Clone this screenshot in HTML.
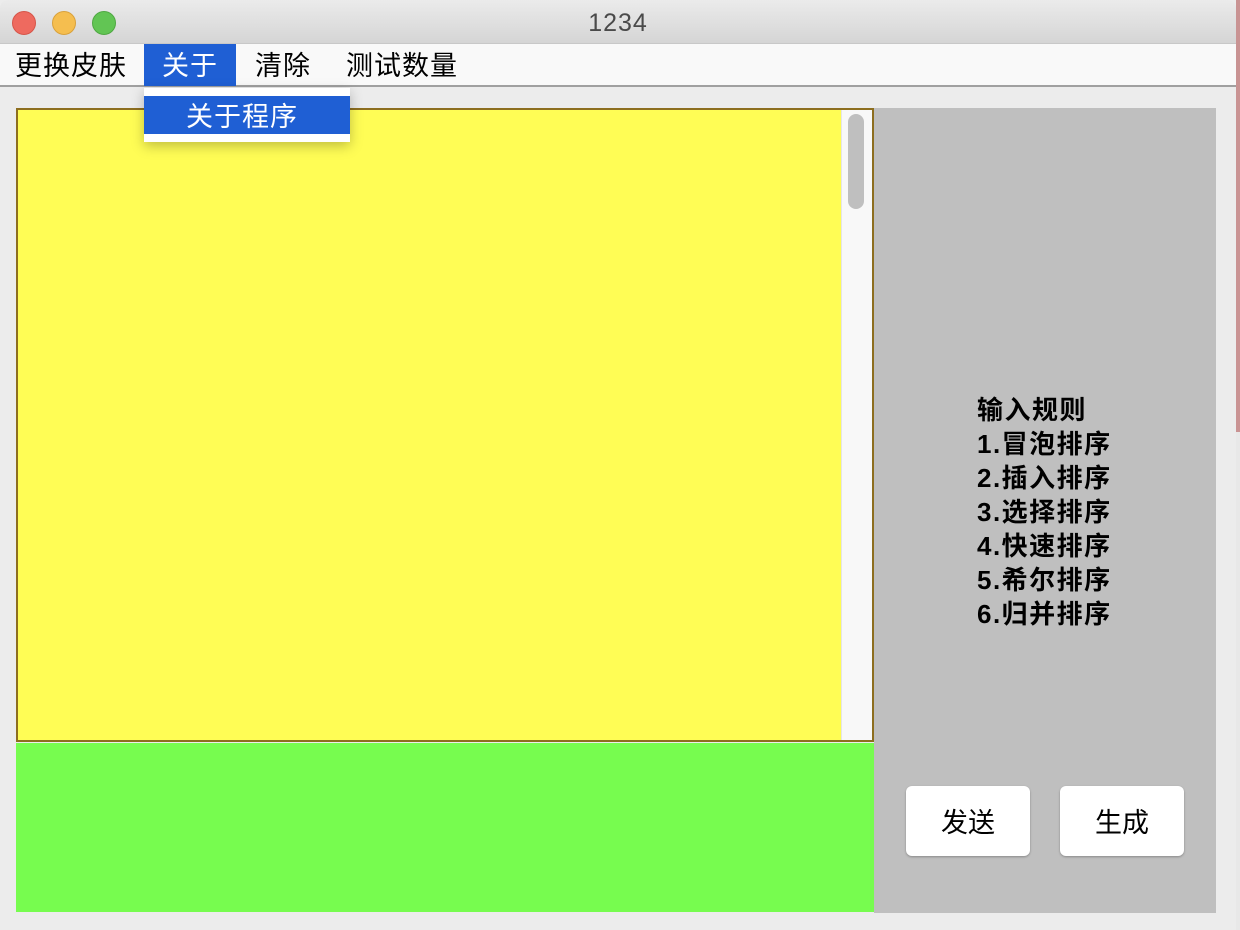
<!DOCTYPE html>
<html><head><meta charset="utf-8"><style>
*{margin:0;padding:0;box-sizing:border-box}
body{width:1240px;height:930px;background:#ececec;position:relative;overflow:hidden;font-family:"Liberation Sans","Noto Sans CJK SC",sans-serif}
.a{position:absolute}
.tb{left:0;top:0;width:1236px;height:44px;background:linear-gradient(#ebebeb,#d5d5d5);border-bottom:1px solid #c8c8c8;border-radius:8px 8px 0 0}
.dot{top:11px;width:24px;height:24px;border-radius:50%}
.mb{left:0;top:44px;width:1236px;height:43px;background:#f9f9f9;border-bottom:2px solid #a0a0a0}
.mi{top:44px;height:42px;font-size:27px;letter-spacing:1px;line-height:44px;color:#000}
</style></head><body>
<div class="a" style="left:1236px;top:0;width:4px;height:432px;background:#c99393"></div>
<div class="a" style="left:1236px;top:432px;width:4px;height:498px;background:#e8e8e8"></div>
<div class="a tb"></div>
<div class="a dot" style="left:12px;background:#ee6a5f;border:1px solid #d65549"></div>
<div class="a dot" style="left:52px;background:#f5be4f;border:1px solid #d9a13b"></div>
<div class="a dot" style="left:92px;background:#62c554;border:1px solid #4fa842"></div>
<div class="a" style="left:0;width:1236px;top:9px;text-align:center;font-size:25px;letter-spacing:1px;color:#4a4a4a">1234</div>
<div class="a mb"></div>
<div class="a mi" style="left:15px">更换皮肤</div>
<div class="a mi" style="left:144px;width:92px;background:#1f5fd4;color:#fff;text-align:center">关于</div>
<div class="a mi" style="left:255px">清除</div>
<div class="a mi" style="left:346px">测试数量</div>
<div class="a" style="left:16px;top:108px;width:858px;height:634px;background:#fffd55;border:2px solid #8d6e1f"></div>
<div class="a" style="left:841px;top:110px;width:31px;height:630px;background:#f8f8f8;border-left:1px solid #e5e5e5"></div>
<div class="a" style="left:848px;top:114px;width:16px;height:95px;background:#bfbfbf;border-radius:8px"></div>
<div class="a" style="left:16px;top:743px;width:858px;height:169px;background:#77fc4f"></div>
<div class="a" style="left:874px;top:108px;width:342px;height:805px;background:#bfbfbf"></div>
<div class="a" style="left:977px;top:393px;font-size:26px;letter-spacing:1.5px;font-weight:bold;line-height:34px;color:#000;white-space:nowrap">输入规则<br>1.冒泡排序<br>2.插入排序<br>3.选择排序<br>4.快速排序<br>5.希尔排序<br>6.归并排序</div>
<div class="a" style="left:906px;top:786px;width:124px;height:70px;background:#fff;border-radius:6px;box-shadow:0 1px 2px #888;font-size:27px;line-height:74px;text-align:center">发送</div>
<div class="a" style="left:1060px;top:786px;width:124px;height:70px;background:#fff;border-radius:6px;box-shadow:0 1px 2px #888;font-size:27px;line-height:74px;text-align:center">生成</div>
<div class="a" style="left:144px;top:88px;width:206px;height:54px;background:#fff;box-shadow:0 4px 12px rgba(0,0,0,.25)"></div>
<div class="a" style="left:144px;top:96px;width:206px;height:38px;background:#1f5fd4;color:#fff;font-size:27px;letter-spacing:1px;line-height:42px;padding-left:42px">关于程序</div>
</body></html>
